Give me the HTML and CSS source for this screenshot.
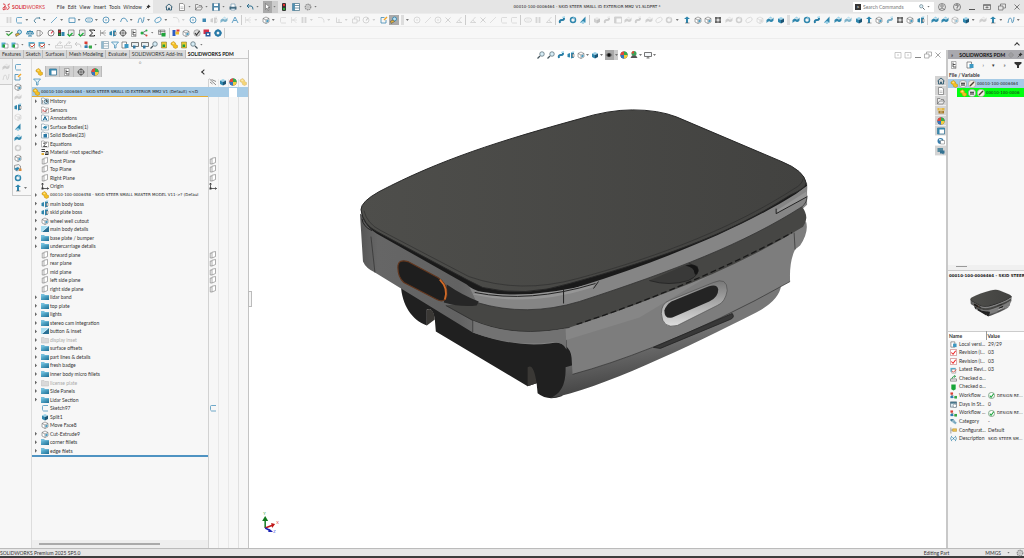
FILE: index.html
```html
<!DOCTYPE html>
<html lang="en">
<head>
<meta charset="utf-8">
<title>SOLIDWORKS</title>
<link rel="stylesheet" href="styles.css">
</head>
<body>
<svg class="defs" aria-hidden="true">
<defs>
<linearGradient id="gTop" x1="0" y1="0" x2="1" y2="0"><stop offset="0" stop-color="#4e4e4b"/><stop offset="1" stop-color="#424240"/></linearGradient>
<linearGradient id="gBand" x1="0" y1="0" x2="1" y2="0"><stop offset="0" stop-color="#555"/><stop offset=".04" stop-color="#666"/><stop offset=".22" stop-color="#626262"/><stop offset=".3" stop-color="#777"/><stop offset=".45" stop-color="#868686"/><stop offset="1" stop-color="#868686"/></linearGradient>
<linearGradient id="gSkirt" x1="0" y1="0" x2=".3" y2="1"><stop offset=".5" stop-color="#777"/><stop offset="1" stop-color="#3b3b3b"/></linearGradient>
<linearGradient id="gGrip" x1="0" y1="0" x2="0" y2="1"><stop offset="0" stop-color="#777"/><stop offset=".6" stop-color="#b5b5b5"/><stop offset="1" stop-color="#dedede"/></linearGradient>
<linearGradient id="gFold" x1="0" y1="0" x2="1" y2="1"><stop offset="0" stop-color="#6fc4e2"/><stop offset="1" stop-color="#1d6d94"/></linearGradient>
</defs>
<symbol id="model" viewBox="355 105 458 298">
<path fill="#202020" d="M401 286 C402 305 412 321 427 326 L427 310 Q433 307 435 320 L436 332 L528 387 L537 384 L538 394 Q548 402 562 397 L580 380 L580 340 L470 300Z"/>
<path fill="#3a3835" d="M427 310 Q434 307 435 320 L427 326Z M528 368 Q534 363 537 384 L528 387Z"/>
<path fill="url(#gSkirt)" d="M573 366 L566 368 Q567 393 550 399 C600 390 690 347 757 313 Q780 301 782 286Z"/>
<path fill="#7d7d7d" d="M565 326 L660 292 L794 232 L807 222 Q810 232 801 246 L796 250 Q790 262 791 282 Q720 322 653 348 Q610 365 573 375 L572 358 Q570 342 550 343Z"/>
<path fill="none" stroke="#333" stroke-width=".7" d="M573 375 Q610 365 653 348 Q720 322 791 282 M566 330 L567 348 M795 233 L796 250"/>
<path fill="url(#gBand)" d="M360 214 L363 262 Q366 269 375 273 L473 333 Q525 352 565 341 L640 318 L770 240 L808 205 L808 183 L470 270Z"/>
<path fill="#464644" d="M446 306 L477 302 Q527 312 580 290 L700 240 L802 200 L803 207 Q811 218 804 227 Q740 266 670 292 Q620 312 570 328 Q515 339 473 321Z"/>
<path fill="none" stroke="#252525" stroke-width=".7" d="M446 306 L473 321 Q515 339 570 328"/>
<path fill="none" stroke="#191919" stroke-width="1.3" stroke-dasharray="6 3" d="M577 325 Q690 288 793 233"/>
<path fill="#727272" d="M473 321 Q515 339 566 329 L567 350 Q562 341 550 343 Q512 347 473 333Z"/>
<path fill="none" stroke="#303030" stroke-width=".7" d="M473 321 V333 M371 237 L375 273"/>
<path fill="#858585" d="M469 286 Q515 303 580 280 C660 258 740 226 808 184 Q809 200 803 207 C745 244 675 271 580 302 Q527 318 477 303Z"/>
<path fill="none" stroke="#333" stroke-width=".8" d="M808 196 Q808 203 803 207 C745 244 675 271 580 302 Q527 318 477 303"/>
<path fill="#1a1a1a" d="M361 208 Q361 224 377 234 L467 285 Q478 296 520 298 Q555 297 580 287 C660 262 740 230 797 194 L808 186 L806 180 L470 276Z"/>
<path fill="#969696" d="M480 292 Q530 301 597 283 L593 288 Q530 308 473 295Z M777 211 L807 192 L808 197 L780 213Z"/>
<path fill="none" stroke="#222" stroke-width="1" d="M475 293 Q530 304 596 284 M594 289 L599 282 M777 209 V214 L808 197 M362 219 Q363 227 372 231 M564 289 V304"/>
<path fill="url(#gTop)" stroke="#282828" stroke-width="1" d="M361 210 Q361 202 379 192 C440 160 500 141 580 119 Q609 110 633 110 Q659 110 677 117 L783 162 Q805 171 807 183 Q808 188 790 196 C730 235 660 259 570 284 Q525 298 483 288 L467 280 L377 232 Q363 225 361 210Z"/>
<path fill="none" stroke="#2b2b2b" stroke-width=".6" d="M364 211 Q367 224 381 231 L469 277 Q520 295 578 279 C664 256 738 226 795 189 Q803 185 804 179"/>
<path fill="#262626" d="M447 285 Q463 296 479 302 L477 306 Q461 308 444 303Z"/>
<path fill="#1e1e1e" stroke="#62361d" stroke-width="1.2" d="M398 268 Q398 259 408 262 L438 278 Q448 284 447 296 Q445 304 437 300 L404 283 Q398 278 398 268Z"/>
<path fill="none" stroke="#cf6a28" stroke-width="1.8" d="M440 280 Q449 289 445 300"/>
<path fill="#393938" stroke="#222" stroke-width=".8" d="M650 281 Q670 287 689 281 Q702 275 698 267 L690 264"/>
<path fill="#151515" d="M686 266 Q699 263 699 272 Q696 278 695 273 Q695 268 686 266Z"/>
<path fill="url(#gGrip)" stroke="#515151" stroke-width=".7" d="M662 314 Q662 304 670 301 L714 283 Q728 277 728 291 Q726 303 718 306 L678 326 Q663 330 662 314Z"/>
<path fill="#242424" d="M665 311 Q667 305 672 302 L709 287 Q718 284 719 290 Q719 298 710 302 L673 318 Q665 320 665 311Z"/>
<path fill="#383838" stroke="#222" stroke-width=".8" d="M654 348 L733 314 Q736 318 731 320 L661 349Z"/>
</symbol>
<symbol id="cube" viewBox="0 0 16 16"><path fill="#9ed2e8" d="M2 5 8 2l6 3-6 3z"/><path fill="#2f86ad" d="M2 5l6 3v7l-6-3z"/><path fill="#1c5575" d="M14 5 8 8v7l6-3z"/></symbol>
<symbol id="cubeg" viewBox="0 0 16 16"><path fill="#fff" stroke="#555" d="M2 5l6-3 6 3v7l-6 3-6-3zM2 5l6 3 6-3M8 8v7"/><path fill="#3d98c2" d="M9 9l4-2v4l-4 2z"/></symbol>
<symbol id="ext" viewBox="0 0 16 16"><path fill="#2f86ad" d="M1 6l5-2v9l-5-1zM8 3h6v10l-6 2z"/><path fill="#9ed2e8" d="M8 3l3-2h4l-1 2z"/><path fill="#fff" stroke="#555" d="M11 6h3v6h-3z"/></symbol>
<symbol id="wedge" viewBox="0 0 16 16"><path fill="#2f86ad" d="M2 13 13 1v12l-5 2z"/><path fill="#9ed2e8" d="M2 13l6-3 5 3-5 2z"/></symbol>
<symbol id="surf" viewBox="0 0 16 16"><path fill="#2f86ad" d="M1 8q4-5 7-2 3 3 7-3v6q-4 5-7 2-3-2-7 3z"/><path fill="#9ed2e8" d="M3 6q4-4 7 0l3-2-4-3z"/></symbol>
<symbol id="swp" viewBox="0 0 16 16"><path fill="none" stroke="#287da5" stroke-width="4" d="M4 14q-2-6 4-6t3-6"/><path fill="#a8dcef" d="M9 1h5v3H9z"/></symbol>
<symbol id="arr" viewBox="0 0 16 16"><path fill="#2f86ad" d="M8 1l6 5h-4v8H6V6H2z"/><path stroke="#444" d="M4 14h9"/></symbol>
<symbol id="ring" viewBox="0 0 16 16"><circle cx="8" cy="8" r="5" fill="none" stroke="#2f86ad" stroke-width="3"/><path fill="#7fbfda" d="M8 1l5 3-4 3z"/></symbol>
<symbol id="hole" viewBox="0 0 16 16"><path fill="#666" d="M2 2h12v12H2z"/><circle cx="8" cy="8" r="3" fill="#ddd"/><path stroke="#ddd" d="M2 8h3M11 8h3M8 2v3M8 11v3"/></symbol>
<symbol id="geo" viewBox="0 0 16 16"><path fill="none" stroke="#555" d="M2 3h6l6 5-6 6H2zM8 3v11"/></symbol>
<symbol id="sk" viewBox="0 0 16 16"><path fill="none" stroke="#4b94bd" stroke-width="1.6" d="M14 3H5Q3 3 3 5v6q0 2 2 3h9"/></symbol>
<symbol id="dim" viewBox="0 0 16 16"><path fill="none" stroke="#3a7391" stroke-width="1.6" d="M2 10q4-9 12-5M2 10l4 4M14 5l-2-3"/></symbol>
<symbol id="line" viewBox="0 0 16 16"><path stroke="#4b94bd" stroke-width="1.5" d="M2 14 14 2"/></symbol>
<symbol id="rect" viewBox="0 0 16 16"><path fill="none" stroke="#3f88b1" stroke-width="1.6" d="M2 4h12v9H2z"/></symbol>
<symbol id="slot" viewBox="0 0 16 16"><rect x="1" y="4" width="14" height="8" rx="4" fill="none" stroke="#3f88b1" stroke-width="1.6"/><path stroke="#3f88b1" d="M4 8h8"/></symbol>
<symbol id="circ" viewBox="0 0 16 16"><circle cx="8" cy="8" r="6" fill="none" stroke="#3f88b1" stroke-width="1.6"/><path stroke="#3f88b1" stroke-width="1.5" d="M6 8h4"/></symbol>
<symbol id="arc" viewBox="0 0 16 16"><path fill="none" stroke="#3f88b1" stroke-width="1.6" d="M1 12q2-9 7-8t7 8"/></symbol>
<symbol id="spl" viewBox="0 0 16 16"><path fill="none" stroke="#3f88b1" stroke-width="1.6" d="M2 14q2-12 5-10t3 9q3 2 4-11"/></symbol>
<symbol id="ell" viewBox="0 0 16 16"><ellipse cx="8" cy="8" rx="7" ry="4.5" transform="rotate(-30 8 8)" fill="none" stroke="#4b94bd" stroke-width="1.5"/></symbol>
<symbol id="fil" viewBox="0 0 16 16"><path fill="none" stroke="#777" stroke-width="1.4" d="M2 3h5q7 0 7 10"/></symbol>
<symbol id="pt" viewBox="0 0 16 16"><path fill="#3f88b1" d="M5 5h7v7H5z"/></symbol>
<symbol id="txt" viewBox="0 0 16 16"><path fill="none" stroke="#4b94bd" stroke-width="1.7" d="M2 14 8 2l6 12M5 9h6"/></symbol>
<symbol id="trim" viewBox="0 0 16 16"><path fill="none" stroke="#666" d="M3 2v12M13 2 5 10M13 14 5 6M3 8h11"/></symbol>
<symbol id="hide" viewBox="0 0 16 16"><path fill="none" stroke="#555" stroke-width="1.300" d="M1 2l13 12M5 3l9 4M2 8l5 4"/></symbol>
<symbol id="x" viewBox="0 0 16 16"><path stroke="#555" stroke-width="1.5" d="M3 3l10 10M13 3 3 13"/></symbol>
<symbol id="ang" viewBox="0 0 16 16"><path fill="none" stroke="#666" stroke-width="1.4" d="M13 2 3 13h11M8 8l4 5"/></symbol>
<symbol id="perp" viewBox="0 0 16 16"><path fill="none" stroke="#666" stroke-width="1.5" d="M3 3v10h11M8 13V6"/></symbol>
<symbol id="grid" viewBox="0 0 16 16"><path fill="none" stroke="#666" stroke-width="1.3" d="M2 4h12M2 8h12M2 12h12M5 2v12M11 2v12"/></symbol>
<symbol id="skd" viewBox="0 0 16 16"><path fill="none" stroke="#3f88b1" stroke-width="1.6" d="M12 8v6H2V3h7"/><path stroke="#f0a62a" stroke-width="3" d="M8 8l6-6"/></symbol>
<symbol id="chk" viewBox="0 0 16 16"><path fill="none" stroke="#39a23e" stroke-width="2.4" d="M3 9l4 4 8-7"/><path stroke="#555" stroke-width="1.5" d="M1 5h9"/></symbol>
<symbol id="lens" viewBox="0 0 16 16"><circle cx="10" cy="6" r="4.5" fill="#d7edf6" stroke="#5a6d77" stroke-width="1.5"/><path stroke="#45555d" stroke-width="2.4" d="M6 10l-5 5"/></symbol>
<symbol id="ruler" viewBox="0 0 16 16"><circle cx="9" cy="6" r="4" fill="#bfe4f3" stroke="#277ca9" stroke-width="1.6"/><path fill="#e8b73b" stroke="#444" d="M1 10l6-2 2 3-7 4z"/></symbol>
<symbol id="scale" viewBox="0 0 16 16"><path fill="none" stroke="#287da5" stroke-width="1.8" d="M8 2v12M2 5h12M4 14h8M3 5l-2 5h5zM13 5l-3 5h5z"/></symbol>
<symbol id="doc" viewBox="0 0 16 16"><path fill="#fff" stroke="#666" stroke-width="1.3" d="M3 1h7l3 3v11H3z"/><path stroke="#888" d="M5 8h6M5 11h6"/></symbol>
<symbol id="docb" viewBox="0 0 16 16"><path fill="#fff" stroke="#555" stroke-width="1.3" d="M2 2h9v12H2z"/><path fill="#3d98c2" d="M7 6h8v8H7z"/></symbol>
<symbol id="gauge" viewBox="0 0 16 16"><circle cx="8" cy="8" r="6" fill="#fff" stroke="#777" stroke-width="1.8"/><path stroke="#d34" stroke-width="2.2" d="M8 9l4-5"/></symbol>
<symbol id="tl" viewBox="0 0 16 16"><rect x="4" y="0" width="8" height="16" rx="2" fill="#333"/><circle cx="8" cy="4" r="2.3" fill="#e33"/><circle cx="8" cy="12" r="2.3" fill="#27b438"/></symbol>
<symbol id="tlb" viewBox="0 0 16 16"><path fill="#333" d="M2 1h6v13H2z"/><path fill="#d33" d="M3 3h4v4H3z"/><path fill="#2f86ad" d="M9 6h6v8H9z"/><path fill="#1ea840" d="M3 9h4v4H3z"/></symbol>
<symbol id="docg" viewBox="0 0 16 16"><path fill="#eee" stroke="#666" stroke-width="1.3" d="M3 2h11v11H3z"/><path fill="none" stroke="#1fae3c" stroke-width="2.6" d="M1 10l4 4 6-6"/></symbol>
<symbol id="sum" viewBox="0 0 16 16"><path fill="none" stroke="#222" stroke-width="2" d="M13 4V2H3l6 6-6 6h10v-2"/></symbol>
<symbol id="tree" viewBox="0 0 16 16"><path fill="none" stroke="#666" stroke-width="1.3" d="M4 4v8h8M4 8h4"/><path fill="#dc3b32" d="M1 1h6v5H1z"/><path fill="#2b7db3" d="M1 9h6v5H1z"/><path fill="#35a847" d="M10 9h6v6h-6z"/></symbol>
<symbol id="share" viewBox="0 0 16 16"><path fill="none" stroke="#333" stroke-width="1.3" d="M13 3 4 8l9 5"/><circle cx="4" cy="8" r="3" fill="#26ac42"/><circle cx="13" cy="3" r="2" fill="#26ac42"/><circle cx="13" cy="13" r="2" fill="#d43"/></symbol>
<symbol id="shg" viewBox="0 0 16 16"><path fill="#ddd" stroke="#555" d="M1 2h13v9H1zM1 5h13M5 2v9"/><path fill="#1fa43a" d="M7 8h8v7H7z"/></symbol>
<symbol id="flag" viewBox="0 0 16 16"><path fill="#2c5cc5" d="M1 2h6v12H1z"/><path fill="#efbb2f" d="M7 5h7v6H7z"/><path fill="#da3e3e" d="M9 1h6v4H9z"/></symbol>
<symbol id="ok" viewBox="0 0 16 16"><circle cx="8" cy="8" r="6.5" fill="#ddd" stroke="#777"/><path fill="none" stroke="#333" stroke-width="2.3" d="M4 8l3 4 6-8"/></symbol>
<symbol id="red" viewBox="0 0 16 16"><path fill="#d32f48" d="M1 1h11v9H1z"/><path fill="#295d9c" d="M5 6h10v9H5z"/><path fill="#fff" d="M8 9h4v3H8z"/></symbol>
<symbol id="bodyd" viewBox="0 0 16 16"><path fill="#eee" stroke="#555" d="M1 3l8-2 4 3v6l-7 4-5-3z"/><path fill="#2f86ad" d="M1 9l7-3 3 3-6 5z"/><path fill="#dd8a3a" d="M10 9h5v5h-5z"/></symbol>
<symbol id="gearb" viewBox="0 0 16 16"><circle cx="8" cy="8" r="5" fill="none" stroke="#2778a6" stroke-width="4"/><path stroke="#2778a6" stroke-width="2" d="M8 0v16M0 8h16"/><circle cx="8" cy="8" r="2.5" fill="#f3f3f3"/></symbol>
<symbol id="gear" viewBox="0 0 16 16"><circle cx="8" cy="8" r="5.5" fill="none" stroke="#888" stroke-width="2.5" stroke-dasharray="3 1"/><circle cx="8" cy="8" r="2.5" fill="none" stroke="#888"/></symbol>
<symbol id="vin" viewBox="0 0 16 16"><path fill="#5ab1d3" d="M1 3h8v10H1z"/><path fill="#fff" stroke="#666" d="M6 6h8v8H6z"/><path fill="#21a33c" d="M3 7h5v6H3z"/></symbol>
<symbol id="vred" viewBox="0 0 16 16"><path fill="#5ab1d3" d="M1 2h12v9H1z"/><path fill="#fff" stroke="#666" d="M4 5h9v9H4z"/><path fill="none" stroke="#d43" stroke-width="2" d="M5 9l3 3 6-6"/></symbol>
<symbol id="scr" viewBox="0 0 16 16"><path fill="#e8eef0" stroke="#555" stroke-width="1.6" d="M1 3h14v8H1z"/><path fill="#3177a0" d="M4 9h5v6H4z"/></symbol>
<symbol id="yel" viewBox="0 0 16 16"><path fill="#e9c92f" stroke="#776a31" d="M3 2h10v12H3z"/><path fill="#239d3c" d="M5 7h5v5H5z"/></symbol>
<symbol id="part" viewBox="0 0 16 16"><path fill="#f4bf22" stroke="#b98617" d="M2 4l5-3 4 3v3l4 2v4l-4 2-4-2-1-4-4-2z"/><path fill="#ffe080" d="M4 4l3-1 2 2-3 2z"/></symbol>
<symbol id="eyeb" viewBox="0 0 16 16"><path fill="#777" d="M1 8q7-9 14 0-7 9-14 0z"/><circle cx="8" cy="8" r="3.4" fill="#111"/></symbol>
<symbol id="ball" viewBox="0 0 16 16"><circle cx="8" cy="8" r="7" fill="#333"/><path fill="#e4463c" d="M8 8V1a7 7 0 0 0-7 7z"/><path fill="#36ae4a" d="M8 8h7a7 7 0 0 0-7-7z"/><path fill="#f3cd3c" d="M8 8v7a7 7 0 0 0 7-7z"/><path fill="#3575bf" d="M8 8H1a7 7 0 0 0 7 7z"/></symbol>
<symbol id="scene" viewBox="0 0 16 16"><circle cx="8" cy="5" r="5" fill="#3ba358"/><path fill="#d84b3c" d="M8 5V0a5 5 0 0 0-5 5z"/><path fill="#555" d="M1 14l3-5h8l3 5z"/></symbol>
<symbol id="mon" viewBox="0 0 16 16"><path fill="#f5f8fa" stroke="#555" stroke-width="1.6" d="M1 3h14v8H1zM8 11v3M5 14h6"/></symbol>
<symbol id="home" viewBox="0 0 16 16"><path fill="none" stroke="#315b72" stroke-width="1.8" d="M1 8l7-6 7 6M3 7v7h4v-4h2v4h4V7"/></symbol>
<symbol id="open" viewBox="0 0 16 16"><path fill="#eee" stroke="#666" stroke-width="1.3" d="M1 14V3h5l2 2h5v3M1 14l4-6h10l-3 6z"/></symbol>
<symbol id="save" viewBox="0 0 16 16"><path fill="#4c86a8" stroke="#3b6c88" d="M1 1h14v14H1z"/><path fill="#fff" d="M4 1h8v5H4zM4 9h8v6H4z"/></symbol>
<symbol id="print" viewBox="0 0 16 16"><path fill="#45697d" d="M1 7h14v6H1z"/><path fill="#fff" stroke="#477b98" d="M4 2h8v6H4zM4 11h8v3H4z"/></symbol>
<symbol id="undo" viewBox="0 0 16 16"><path fill="none" stroke="#31708f" stroke-width="2" d="M6 2 2 6l4 4M2 6h8q4 0 4 7"/></symbol>
<symbol id="cur" viewBox="0 0 16 16"><path fill="#fff" stroke="#555" d="M5 1v12l3-3 2 5 2-1-2-5h4z"/></symbol>
<symbol id="list" viewBox="0 0 16 16"><path fill="#fff" stroke="#49758b" stroke-width="1.5" d="M1 1h14v14H1zM5 1v14M5 5h10M5 10h10"/><path fill="#4e91b5" d="M1 1h4v14H1z"/></symbol>
<symbol id="pin" viewBox="0 0 16 16"><path fill="#333" d="M9 1l6 6-3 1-3 4-5-5 4-3z"/><path stroke="#333" stroke-width="1.5" d="M7 9l-5 5"/></symbol>
<symbol id="user" viewBox="0 0 16 16"><circle cx="8" cy="8" r="7" fill="none" stroke="#555" stroke-width="1.3"/><circle cx="8" cy="6" r="2.5" fill="none" stroke="#555" stroke-width="1.3"/><path fill="none" stroke="#555" stroke-width="1.3" d="M3 13q5-6 10 0"/></symbol>
<symbol id="help" viewBox="0 0 16 16"><circle cx="8" cy="8" r="7" fill="none" stroke="#555" stroke-width="1.4"/><path fill="none" stroke="#444" stroke-width="1.6" d="M5.500 6q0-2.500 2.500-2.500T10.500 6q0 1.500-2.500 2.500v1.500M8 11v2"/></symbol>
<symbol id="min" viewBox="0 0 16 16"><path stroke="#555" stroke-width="2" d="M2 13h12"/></symbol>
<symbol id="dock" viewBox="0 0 16 16"><path fill="none" stroke="#666" stroke-width="1.5" d="M1 3h14v10H1zM1 5h14M8 6v5M5 9h6"/></symbol>
<symbol id="rest" viewBox="0 0 16 16"><path fill="none" stroke="#666" stroke-width="1.4" d="M1 6h9v8H1zM5 6V2h10v8h-5"/></symbol>
<symbol id="pane" viewBox="0 0 16 16"><path fill="none" stroke="#888" stroke-width="1.3" d="M2 3h12v11H2zM10 8H6"/></symbol>
<symbol id="funnel" viewBox="0 0 16 16"><path fill="#e8f6fc" stroke="#3f88b1" stroke-width="1.5" d="M1 2h14l-5 6v6H7V8z"/></symbol>
<symbol id="fdark" viewBox="0 0 16 16"><path fill="#333" d="M1 2h14v3l-5 4v5H6V9L1 5z"/></symbol>
<symbol id="prop" viewBox="0 0 16 16"><path fill="#fff" stroke="#2c6c8f" stroke-width="1.5" d="M1 2h14v12H1z"/><path fill="#3888ae" d="M1 2h14v3H1zM1 5h4v9H1z"/></symbol>
<symbol id="conf" viewBox="0 0 16 16"><path fill="#fff" stroke="#666" d="M3 1h9v14H3z"/><path fill="none" stroke="#333" stroke-width="1.6" d="M6 3v9h6M6 7h5"/></symbol>
<symbol id="target" viewBox="0 0 16 16"><circle cx="8" cy="8" r="5.500" fill="none" stroke="#444" stroke-width="1.5"/><path stroke="#444" stroke-width="1.300" d="M8 0v16M0 8h16"/></symbol>
<symbol id="fold" viewBox="0 0 16 16"><path fill="#78bedb" d="M0 2h6l2 2h8v3H0z"/><path fill="url(#gFold)" d="M0 5h16v9H0z"/></symbol>
<symbol id="folds" viewBox="0 0 16 16"><path fill="#a6ddf1" d="M0 2h16v12H0z"/><path fill="#286f93" d="M16 2v12H2z"/><path stroke="#fff" d="M1 14 15 2"/></symbol>
<symbol id="foldg" viewBox="0 0 16 16"><path fill="#d9d9d9" stroke="#bbb" d="M1 3h5l2 2h7v9H1z"/></symbol>
<symbol id="fhist" viewBox="0 0 16 16"><path fill="#fff" stroke="#59798a" d="M1 2h5l2 2h7v10H1z"/><circle cx="10" cy="9" r="4" fill="#cfe8f3" stroke="#3c6478" stroke-width="1.500"/><path stroke="#333" d="M10 6v3h3M3 6v7"/></symbol>
<symbol id="fsens" viewBox="0 0 16 16"><path fill="#fff" stroke="#777" d="M1 2h5l2 2h7v10H1z"/><path fill="none" stroke="#c44" stroke-width="1.500" d="M4 12V7l4 5 5-6"/><path stroke="#333" d="M10 6v7"/></symbol>
<symbol id="fann" viewBox="0 0 16 16"><path fill="#fff" stroke="#59798a" d="M1 2h5l2 2h7v10H1z"/><path fill="none" stroke="#1f6e99" stroke-width="2" d="M4 13l4-8 4 8M6 10h5"/></symbol>
<symbol id="fsurf" viewBox="0 0 16 16"><path fill="#fff" stroke="#59798a" d="M1 2h5l2 2h7v10H1z"/><path fill="#2f86ad" d="M3 10l4-4 6 1-3 5z"/></symbol>
<symbol id="fsol" viewBox="0 0 16 16"><path fill="#fff" stroke="#59798a" d="M1 2h5l2 2h7v10H1z"/><path fill="#2778a6" d="M5 6h7v7H5z"/></symbol>
<symbol id="feq" viewBox="0 0 16 16"><path fill="#fff" stroke="#777" d="M1 2h5l2 2h7v10H1z"/><path fill="none" stroke="#222" stroke-width="1.500" d="M12 6H5l3 3-3 4h7"/></symbol>
<symbol id="mat" viewBox="0 0 16 16"><path stroke="#444" stroke-width="2" d="M1 3h7M1 7h7"/><path fill="#e0ae35" d="M1 10h5v4H1z"/><path fill="none" stroke="#333" stroke-width="2" d="M8 13h7M10 12V7h4v5"/></symbol>
<symbol id="pl" viewBox="0 0 16 16"><path fill="#fff" stroke="#777" stroke-width="1.200" d="M6 2.500 13 1v10l-7 3zM6 4H2.500v10H6"/></symbol>
<symbol id="org" viewBox="0 0 16 16"><path fill="none" stroke="#333" stroke-width="1.500" d="M3 2v11h12M1 5l2-3 2 3M12 11l3 2-3 2"/><path fill="#333" d="M1 11h4v4H1z"/></symbol>
<symbol id="book" viewBox="0 0 16 16"><path fill="#e3b646" d="M1 2h14v5H1z"/><path fill="#a57b29" d="M3 8h11v5H3z"/><path stroke="#fff" d="M4 4h6M6 10h5"/></symbol>
<symbol id="cfgt" viewBox="0 0 16 16"><path fill="none" stroke="#777" stroke-width="1.500" d="M2 1v14M2 7h5"/><path fill="#efc34c" stroke="#a87e21" d="M6 4h9v6H6z"/></symbol>
<symbol id="pdm" viewBox="0 0 16 16"><circle cx="7" cy="8" r="6" fill="#397eac"/><path fill="#fff" stroke="#666" d="M7 7h8v7H7z"/><path fill="#d5e8f0" d="M4 4h5v3H4z"/></symbol>
<symbol id="chat" viewBox="0 0 16 16"><path fill="#54899e" d="M1 2h11v8H1z"/><path fill="#347292" d="M6 7h9v6h-2v2l-3-2H6z"/></symbol>
<symbol id="eq" viewBox="0 0 16 16"><circle cx="8" cy="8" r="7.500" fill="#eee" stroke="#777"/><path stroke="#222" stroke-width="2" d="M4 6.500h8M4 10h8"/></symbol>
<symbol id="pen" viewBox="0 0 16 16"><circle cx="8" cy="8" r="7.500" fill="#f4eee3" stroke="#888"/><path stroke="#4d4235" stroke-width="3" d="M4 12l8-8"/></symbol>
<symbol id="rchk" viewBox="0 0 16 16"><path fill="#fff" stroke="#b66" stroke-width="1.300" d="M1 1h14v14H1z"/><path fill="none" stroke="#e22" stroke-width="2.400" d="M3 8l4 4 6-8"/></symbol>
<symbol id="gchk" viewBox="0 0 16 16"><circle cx="8" cy="8" r="7" fill="#fff" stroke="#397746" stroke-width="1.300"/><path fill="none" stroke="#19a33a" stroke-width="2.400" d="M4 8l3 4 6-8"/></symbol>
<symbol id="out" viewBox="0 0 16 16"><path fill="#eee" stroke="#555" stroke-width="1.300" d="M1 9h14v5H1z"/><path fill="none" stroke="#259743" stroke-width="2" d="M4 9q1-6 7-6M9 1l4 2-3 3"/></symbol>
<symbol id="grn" viewBox="0 0 16 16"><path fill="#16a536" d="M3 1h10v11l-5 3-5-3z"/></symbol>
<symbol id="days" viewBox="0 0 16 16"><path fill="#ddeaf0" stroke="#567" stroke-width="1.500" d="M1 2h14v12H1z"/><path fill="#477489" d="M1 2h14v4H1z"/><circle cx="11" cy="11" r="4" fill="#fff" stroke="#456"/></symbol>
<symbol id="tags" viewBox="0 0 16 16"><path fill="#43819d" d="M1 2h6l5 5-4 4-7-5z"/><path fill="#77a8c0" stroke="#fff" d="M6 6h5l5 5-4 4-6-5z"/></symbol>
<symbol id="var" viewBox="0 0 16 16"><path fill="none" stroke="#287da5" stroke-width="1.600" d="M4 2q-5 6 0 12M12 2q5 6 0 12M5.500 5l5 6M10.500 5l-5 6"/></symbol>
<symbol id="ds" viewBox="0 0 48 44"><path fill="none" stroke="#d5202a" stroke-width="4.500" d="M5 5q14 0 12 9t-15 15M17 20q9 3 5 11-5 7-17 6 8-7 12-17M43 5q-15 2-10 9 9 9 5 15t-13 7"/></symbol>
</svg>

<div class="app">
<header class="title">
<div class="brand"><svg class="ds"><use href="#ds"/></svg><span><b>SOLID</b>WORKS</span>
<nav><button>File</button><button>Edit</button><button>View</button><button>Insert</button><button>Tools</button><button>Window</button></nav><svg><use href="#pin"/></svg></div>
<div class="quick"><button><svg><use href="#home"/></svg></button><button class="d"><svg><use href="#doc"/></svg></button><button class="d"><svg><use href="#open"/></svg></button><button class="d"><svg><use href="#save"/></svg></button><button class="d"><svg><use href="#print"/></svg></button><button class="d"><svg><use href="#undo"/></svg></button><button class="d pick"><svg><use href="#cur"/></svg></button><button><svg><use href="#tl"/></svg></button><button class="wide"><svg><use href="#list"/></svg></button><button class="d"><svg><use href="#gear"/></svg></button></div>
<h1 class="id">00010-100-0006464 - SKID STEER SMALL ID EXTERIOR MM2 V1.SLDPRT *</h1>
<label class="search"><span class="prompt">&gt;</span><input type="text" placeholder="Search Commands" aria-label="Search Commands"><svg class="flip"><use href="#lens"/></svg><i></i></label>
<div class="win"><button><svg><use href="#user"/></svg></button><button><svg><use href="#help"/></svg></button><button><svg><use href="#min"/></svg></button><button><svg><use href="#dock"/></svg></button><button><svg><use href="#rest"/></svg></button><button><svg><use href="#x"/></svg></button></div>
</header>

<div class="bar main">
<button class="off"><svg><use href="#grid"/></svg></button><button class="d"><svg><use href="#sk"/></svg></button><button class="d"><svg><use href="#dim"/></svg></button><button class="d"><svg><use href="#line"/></svg></button><button class="d"><svg><use href="#rect"/></svg></button><button class="d"><svg><use href="#slot"/></svg></button><button class="d"><svg><use href="#circ"/></svg></button><button class="d"><svg><use href="#arc"/></svg></button><button class="d"><svg><use href="#spl"/></svg></button><button class="d"><svg><use href="#ell"/></svg></button><button class="d off"><svg><use href="#fil"/></svg></button><button><svg><use href="#circ"/></svg></button><button><svg><use href="#pt"/></svg></button><button class="off"><svg><use href="#ext"/></svg></button><button class="dim"><svg><use href="#surf"/></svg></button><button><svg><use href="#txt"/></svg></button><i class="s"></i><button class="d off"><svg><use href="#trim"/></svg></button><button class="d"><svg><use href="#cubeg"/></svg></button><button class="off"><svg><use href="#sk"/></svg></button><button class="off"><svg><use href="#trim"/></svg></button><button class="d off"><svg><use href="#grid"/></svg></button><button class="d off"><svg><use href="#fil"/></svg></button><button class="d off"><svg><use href="#perp"/></svg></button><button class="off"><svg><use href="#rest"/></svg></button><button class="d off"><svg><use href="#gauge"/></svg></button><button><svg><use href="#skd"/></svg></button><button class="on"><svg><use href="#ruler"/></svg></button><i class="s fat"></i><i class="dot"></i><button class="off"><svg><use href="#circ"/></svg></button><button class="off"><svg><use href="#line"/></svg></button><button class="off"><svg><use href="#circ"/></svg></button><button class="off"><svg><use href="#x"/></svg></button><button class="off"><svg><use href="#ang"/></svg></button><i class="s"></i><button class="off"><svg><use href="#ang"/></svg></button><button class="off"><svg><use href="#x"/></svg></button><button class="off"><svg><use href="#line"/></svg></button><button class="off"><svg><use href="#sk"/></svg></button><button class="off"><svg><use href="#sk"/></svg></button><i class="s"></i><button class="off"><svg><use href="#slot"/></svg></button><button class="off"><svg><use href="#grid"/></svg></button><button class="off"><svg><use href="#ang"/></svg></button><i class="s"></i><button><svg><use href="#swp"/></svg></button><button><svg><use href="#ring"/></svg></button><button><svg><use href="#wedge"/></svg></button><i class="s"></i><button class="off"><svg><use href="#cube"/></svg></button><button class="off"><svg><use href="#swp"/></svg></button><button class="off"><svg><use href="#prop"/></svg></button><button class="off"><svg><use href="#surf"/></svg></button><button class="off"><svg><use href="#swp"/></svg></button><button class="off"><svg><use href="#surf"/></svg></button><button class="off"><svg><use href="#ell"/></svg></button><button class="off"><svg><use href="#ring"/></svg></button><i class="dot"></i><button><svg><use href="#arr"/></svg></button><button><svg><use href="#cubeg"/></svg></button><button><svg><use href="#cubeg"/></svg></button><button><svg><use href="#hole"/></svg></button><button class="off"><svg><use href="#surf"/></svg></button><button class="off"><svg><use href="#ring"/></svg></button><button class="off"><svg><use href="#ell"/></svg></button><button class="off"><svg><use href="#cubeg"/></svg></button><button><svg><use href="#surf"/></svg></button><button><svg><use href="#cube"/></svg></button><i class="s fat"></i><button><svg><use href="#surf"/></svg></button><button><svg><use href="#ring"/></svg></button><button><svg><use href="#swp"/></svg></button><button><svg><use href="#wedge"/></svg></button><button><svg><use href="#surf"/></svg></button><button class="dim"><svg><use href="#surf"/></svg></button><button><svg><use href="#cube"/></svg></button><button><svg><use href="#arr"/></svg></button><button><svg><use href="#cubeg"/></svg></button><button class="dim"><svg><use href="#swp"/></svg></button><button><svg><use href="#hole"/></svg></button><button><svg><use href="#cubeg"/></svg></button><button><svg><use href="#ext"/></svg></button><i class="s"></i><button><svg><use href="#surf"/></svg></button><button><svg><use href="#surf"/></svg></button><button class="dim"><svg><use href="#cubeg"/></svg></button><button class="d"><svg><use href="#cube"/></svg></button><button class="off"><svg><use href="#surf"/></svg></button><button class="d"><svg><use href="#arr"/></svg></button><button class="d"><svg><use href="#spl"/></svg></button>
</div>
<div class="bar"><div class="set eval"><button><svg><use href="#chk"/></svg></button><button><svg><use href="#ruler"/></svg></button><button><svg><use href="#scale"/></svg></button><button><svg><use href="#geo"/></svg></button><button><svg><use href="#gauge"/></svg></button><button><svg><use href="#tlb"/></svg></button><button><svg><use href="#docg"/></svg></button><button><svg><use href="#docg"/></svg></button><button><svg><use href="#sum"/></svg></button><button><svg><use href="#trim"/></svg></button><button><svg><use href="#ext"/></svg></button><button><svg><use href="#target"/></svg></button><button><svg><use href="#conf"/></svg></button><button><svg><use href="#share"/></svg></button><i class="dot"></i><button><svg><use href="#shg"/></svg></button><i class="s"></i><button><svg><use href="#flag"/></svg></button><button><svg><use href="#cubeg"/></svg></button><button><svg><use href="#ok"/></svg></button><button><svg><use href="#red"/></svg></button><button><svg><use href="#gearb"/></svg></button><i class="s"></i></div></div>
<div class="bar"><div class="set vault"><button><svg><use href="#vin"/></svg></button><button class="d"><svg><use href="#vin"/></svg></button><button><svg><use href="#vred"/></svg></button><button class="d"><svg><use href="#vred"/></svg></button><button class="off"><svg><use href="#out"/></svg></button><button class="off"><svg><use href="#out"/></svg></button><button class="off"><svg><use href="#undo"/></svg></button><button class="d"><svg><use href="#tree"/></svg></button><button class="dim"><svg><use href="#list"/></svg></button><button><svg><use href="#funnel"/></svg></button><button><svg><use href="#docb"/></svg></button><button><svg><use href="#scr"/></svg></button><button><svg><use href="#scr"/></svg></button><button><svg><use href="#lens"/></svg></button><button><svg><use href="#yel"/></svg></button><button><svg><use href="#part"/></svg></button><button><svg><use href="#yel"/></svg></button><button class="d"><svg class="flip"><use href="#lens"/></svg></button></div><span class="up"></span></div>

<div class="body">
<aside class="left">
<div class="tabs"><button>Features</button><button>Sketch</button><button>Surfaces</button><button>Mesh Modeling</button><button>Evaluate</button><button>SOLIDWORKS Add-Ins</button><button class="act">SOLIDWORKS PDM</button></div>
<div class="cols">
<div class="tool1"><button class="off"><svg><use href="#surf"/></svg></button><button class="off"><svg><use href="#spl"/></svg></button></div>
<div class="tool2"><button><svg><use href="#sk"/></svg></button><button><svg><use href="#skd"/></svg></button><button><svg><use href="#cubeg"/></svg></button><button class="off"><svg><use href="#surf"/></svg></button><button><svg><use href="#ext"/></svg></button><button class="off"><svg><use href="#cubeg"/></svg></button><button><svg><use href="#wedge"/></svg></button><button><svg><use href="#surf"/></svg></button><button class="off"><svg><use href="#ring"/></svg></button><button><svg><use href="#cubeg"/></svg></button><button><svg><use href="#bodyd"/></svg></button><button><svg><use href="#ring"/></svg></button><button class="d"><svg><use href="#arr"/></svg></button></div>
<section class="fm">
<div class="grip">○</div>
<div class="fmtabs"><button class="act"><svg><use href="#part"/></svg></button><button><svg><use href="#prop"/></svg></button><button><svg><use href="#conf"/></svg></button><button><svg><use href="#target"/></svg></button><button><svg><use href="#ball"/></svg></button><span class="back"></span></div>
<div class="row filter"><span><svg><use href="#funnel"/></svg></span><svg><use href="#hide"/></svg><svg><use href="#cube"/></svg><svg><use href="#ball"/></svg><svg class="dim"><use href="#part"/></svg></div>
<div class="row root"><span class="id"><svg><use href="#part"/></svg>00010-100-0006464 - SKID STEER SMALL ID EXTERIOR MM2 V1 (Default) &lt;&lt;D</span><i></i><i></i><i class="w"></i><i></i></div>
<ul class="tree">
<li class="row e"><span><svg><use href="#fhist"/></svg>History</span></li>
<li class="row"><span><svg><use href="#fsens"/></svg>Sensors</span></li>
<li class="row e"><span><svg><use href="#fann"/></svg>Annotations</span></li>
<li class="row e"><span><svg><use href="#fsurf"/></svg>Surface Bodies(1)</span></li>
<li class="row e"><span><svg><use href="#fsol"/></svg>Solid Bodies(23)</span></li>
<li class="row e"><span><svg><use href="#feq"/></svg>Equations</span></li>
<li class="row"><span><svg><use href="#mat"/></svg>Material &lt;not specified&gt;</span></li>
<li class="row"><span><svg><use href="#pl"/></svg>Front Plane</span><svg><use href="#pl"/></svg></li>
<li class="row"><span><svg><use href="#pl"/></svg>Top Plane</span><svg><use href="#pl"/></svg></li>
<li class="row"><span><svg><use href="#pl"/></svg>Right Plane</span><svg><use href="#pl"/></svg></li>
<li class="row"><span><svg><use href="#org"/></svg>Origin</span><svg><use href="#org"/></svg></li>
<li class="row e"><span class="id"><svg><use href="#part"/></svg>00010-100-0006458 - SKID STEER SMALL MASTER MODEL V11-&gt;? (Defaul</span></li>
<li class="row e"><span><svg><use href="#ext"/></svg>main body boss</span></li>
<li class="row e"><span><svg><use href="#ext"/></svg>skid plate boss</span></li>
<li class="row e"><span><svg><use href="#cubeg"/></svg>wheel well cutout</span></li>
<li class="row e"><span><svg><use href="#folds"/></svg>main body details</span></li>
<li class="row e"><span><svg><use href="#fold"/></svg>base plate / bumper</span></li>
<li class="row e"><span><svg><use href="#fold"/></svg>undercarriage details</span></li>
<li class="row"><span><svg><use href="#pl"/></svg>forward plane</span><svg><use href="#pl"/></svg></li>
<li class="row"><span><svg><use href="#pl"/></svg>rear plane</span><svg><use href="#pl"/></svg></li>
<li class="row"><span><svg><use href="#pl"/></svg>mid plane</span><svg><use href="#pl"/></svg></li>
<li class="row"><span><svg><use href="#pl"/></svg>left side plane</span><svg><use href="#pl"/></svg></li>
<li class="row"><span><svg><use href="#pl"/></svg>right side plane</span><svg><use href="#pl"/></svg></li>
<li class="row e"><span><svg><use href="#fold"/></svg>lidar band</span></li>
<li class="row e"><span><svg><use href="#fold"/></svg>top plate</span></li>
<li class="row e"><span><svg><use href="#fold"/></svg>lights</span></li>
<li class="row e"><span><svg><use href="#fold"/></svg>stereo cam integration</span></li>
<li class="row e"><span><svg><use href="#folds"/></svg>button &amp; inset</span></li>
<li class="row e g"><span><svg><use href="#foldg"/></svg>display inset</span></li>
<li class="row e"><span><svg><use href="#fold"/></svg>surface offsets</span></li>
<li class="row e"><span><svg><use href="#fold"/></svg>part lines &amp; details</span></li>
<li class="row e"><span><svg><use href="#fold"/></svg>fresh badge</span></li>
<li class="row e"><span><svg><use href="#fold"/></svg>inner body micro fillets</span></li>
<li class="row e g"><span><svg><use href="#foldg"/></svg>license plate</span></li>
<li class="row e"><span><svg><use href="#fold"/></svg>Side Panels</span></li>
<li class="row e"><span><svg><use href="#fold"/></svg>Lidar Section</span></li>
<li class="row"><span><svg><use href="#sk"/></svg>Sketch97</span><svg><use href="#sk"/></svg></li>
<li class="row"><span><svg><use href="#cube"/></svg>Split1</span></li>
<li class="row"><span><svg><use href="#cubeg"/></svg>Move Face8</span></li>
<li class="row e"><span><svg><use href="#cubeg"/></svg>Cut-Extrude9</span></li>
<li class="row e"><span><svg><use href="#fold"/></svg>corner fillets</span></li>
<li class="row e"><span><svg><use href="#fold"/></svg>edge filets</span></li>
</ul>
<div class="rollback"></div>
<div class="hscroll"><i></i></div>
</section>
</div>
</aside>

<main class="view">
<svg class="canvas" viewBox="249 50 698 499">
<use href="#model" x="355" y="105" width="458" height="298"/>
<g stroke-width="1.500" fill="none"><path stroke="#117a1d" d="M265 529v-8"/><path stroke="#c01818" d="M265 529l8-3"/><path stroke="#1a22b5" d="M265 529l6 3"/></g>
<path fill="#117a1d" d="M262 522l3-5 3 5z"/><path fill="#c01818" d="M271 524l4 1-3 4z"/><path fill="#1a22b5" d="M269 530l4 3-5 0z"/>
<g class="ax"><text x="263" y="516" fill="#2ca53a">Y</text><text x="276" y="525" fill="#e04444">X</text><text x="273" y="534" fill="#4a52dd">Z</text></g>
</svg>
<div class="heads"><button><svg><use href="#lens"/></svg></button><button><svg><use href="#lens"/></svg></button><button><svg><use href="#swp"/></svg></button><button><svg><use href="#ext"/></svg></button><button class="d"><svg><use href="#cubeg"/></svg></button><button class="d"><svg><use href="#cube"/></svg></button><button class="d pick"><svg><use href="#eyeb"/></svg></button><button><svg><use href="#ball"/></svg></button><button class="d"><svg><use href="#scene"/></svg></button><button class="d"><svg><use href="#mon"/></svg></button></div>
<div class="docwin"><button><svg><use href="#pane"/></svg></button><button><svg><use href="#pane"/></svg></button><button><svg><use href="#min"/></svg></button><button><svg><use href="#rest"/></svg></button><button><svg><use href="#x"/></svg></button></div>
<div class="task"><button><svg><use href="#home"/></svg></button><button><svg><use href="#doc"/></svg></button><button><svg><use href="#open"/></svg></button><button><svg><use href="#book"/></svg></button><button><svg><use href="#ball"/></svg></button><button><svg><use href="#prop"/></svg></button><button class="act"><svg><use href="#pdm"/></svg></button><button><svg><use href="#chat"/></svg></button></div>
<button class="split" aria-label="Collapse panel"></button>
</main>

<aside class="pdm">
<header><span>»</span><b>SOLIDWORKS PDM</b><svg><use href="#gear"/></svg><svg><use href="#pin"/></svg></header>
<div class="ptools"><button><svg><use href="#conf"/></svg></button><button><svg><use href="#docb"/></svg></button><span>›</span><span>▾</span><span>»</span><button><svg><use href="#fdark"/></svg></button></div>
<h2>File / Variable</h2>
<div class="file sel id"><svg><use href="#part"/></svg><svg><use href="#eq"/></svg><svg><use href="#pen"/></svg>00010-100-0006464</div>
<div class="file ref id"><svg><use href="#part"/></svg><svg><use href="#eq"/></svg><svg><use href="#pen"/></svg>00010-100-0006</div>
<div class="pscroll"><i></i></div>
<h3 class="id">00010-100-0006464 - SKID STEER</h3>
<svg class="thumb"><use href="#model"/></svg>
<table>
<thead><tr><th>Name</th><th>Value</th></tr></thead>
<tbody>
<tr><td><svg><use href="#docb"/></svg>Local versi...</td><td>29/29</td></tr>
<tr><td><svg><use href="#rchk"/></svg>Revision (l...</td><td>03</td></tr>
<tr><td><svg><use href="#rchk"/></svg>Revision (l...</td><td>03</td></tr>
<tr><td><svg><use href="#vred"/></svg>Latest Revi...</td><td>03</td></tr>
<tr><td><svg><use href="#out"/></svg>Checked o...</td><td></td></tr>
<tr><td><svg><use href="#grn"/></svg>Checked o...</td><td></td></tr>
<tr><td><svg><use href="#tree"/></svg>Workflow ...</td><td class="id"><svg><use href="#gchk"/></svg>DESIGN RE...</td></tr>
<tr><td><svg><use href="#days"/></svg>Days In St...</td><td>0</td></tr>
<tr><td><svg><use href="#tree"/></svg>Workflow ...</td><td class="id"><svg><use href="#gchk"/></svg>DESIGN RE...</td></tr>
<tr><td><svg><use href="#tags"/></svg>Category</td><td>-</td></tr>
<tr><td><svg><use href="#cfgt"/></svg>Configurat...</td><td>Default</td></tr>
<tr><td><svg><use href="#var"/></svg>Description</td><td class="id">SKID STEER SM...</td></tr>
</tbody>
</table>
</aside>
</div>

<footer><span>SOLIDWORKS Premium 2025 SP5.0</span><span class="edit">Editing Part</span><button>MMGS</button><i class="dot"></i><svg><use href="#gear"/></svg></footer>
</div>
</body>
</html>
```

FILE: styles.css
```css
* { box-sizing: border-box; }
body { margin: 0; font: 5px/8px Lato, "Open Sans", sans-serif; color: #333; background: #fff; overflow: hidden; }
svg { width: 8px; height: 8px; flex: none; display: block; }
.defs { position: absolute; width: 0; height: 0; }
button { font: inherit; color: inherit; border: 0; padding: 0; background: none; display: flex; align-items: center; flex: none; }
h1, h2, h3, ul { margin: 0; padding: 0; font: inherit; list-style: none; white-space: nowrap; }
.app .id { font-family: "DejaVu Sans", sans-serif; font-size: 4px; color: #222; }
.off { opacity: .3; filter: grayscale(1); }
.dim { opacity: .6; }
.flip { transform: scaleX(-1); }
.d { width: 15px; justify-content: space-between; }
.d::after, .dot, .search i { content: ""; width: 3px; height: 2px; margin-right: 2px; background: #777; clip-path: polygon(0 0, 100% 0, 50% 100%); }
.app { height: 100vh; display: flex; flex-direction: column; border-bottom: 2px solid #3c3c3c; }

.title { display: flex; align-items: center; height: 13px; flex: none; background: #e5e5e5; }
.brand { display: flex; align-items: center; width: 153px; height: 13px; padding-left: 2px; background: #f5f5f5; flex: none; }
.brand > span { color: #d9363c; margin-left: 1px; }
.brand svg.ds { width: 9px; height: 8px; }
.brand > svg:last-child { width: 6px; height: 6px; margin: 0 2px 0 3px; }
.brand nav { display: flex; flex: 1; gap: 3px; justify-content: flex-end; }
.quick { display: flex; align-items: center; gap: 2px; padding-left: 12px; }
.quick > :first-child { margin-right: 3px; }
.quick .wide { margin: 0 2px; }
.pick { background: linear-gradient(90deg, #a9a9a9 9px, #ccc 9px); height: 12px; }
.title h1 { flex: 1; text-align: center; padding-left: 2px; }
.search { display: flex; align-items: center; width: 81px; height: 10px; background: #fff; padding: 0 2px; gap: 2px; }
.prompt { background: #333; color: #fff; width: 6px; height: 6px; line-height: 6px; text-align: center; }
.search input { flex: 1; min-width: 0; border: 0; padding: 0; font: inherit; outline: 0; }
.search input::placeholder { color: #777; }
.search svg { width: 6px; height: 6px; }
.win { display: flex; gap: 7px; padding: 0 3px 0 4px; }

.bar { display: flex; align-items: center; justify-content: space-between; height: 12px; flex: none; background: #f7f7f7; border-top: 1px solid #ececec; padding: 0 5px; }
.main { height: 13px; padding-right: 1px; }
.set { display: flex; align-items: center; justify-content: space-between; }
.eval { width: 220px; }
.vault { width: 204px; margin-left: -4px; }
.s { width: 1px; height: 10px; background: #ccc; }
.s.fat { width: 3px; background: #ddd; }
.on { background: #aaa; box-shadow: 0 0 0 1px #aaa; }
.up, .back { width: 4px; height: 4px; border: solid #333; border-width: 1px 0 0 1px; transform: rotate(45deg); }

.body { flex: 1; display: flex; min-height: 0; }
.left { width: 249px; flex: none; display: flex; flex-direction: column; background: #f7f7f7; border-right: 1px solid #c4c4c4; }
.tabs { display: flex; height: 9px; border-bottom: 1px solid #c8c8c8; background: #f7f7f7; }
.tabs button { background: #dadada; border-right: 1px solid #bbb; padding: 0 2px; white-space: nowrap; }
.tabs .act { background: #f7f7f7; font-weight: 700; color: #111; border: 0; }
.cols { flex: 1; display: flex; align-items: flex-start; }
.tool1 { width: 12px; height: 26px; border-bottom: 1px solid #ccc; display: flex; flex-direction: column; gap: 2px; padding: 4px 2px; background: #f1f1f1; }
.tool2 { width: 19px; height: 137px; border: solid #ccc; border-width: 0 0 1px 1px; display: flex; flex-direction: column; justify-content: space-between; padding: 4px 1px 3px 1px; }
.fm { flex: 1; align-self: stretch; min-width: 0; display: flex; flex-direction: column; border-left: 1px solid #ddd;
  background: linear-gradient(90deg, #d2d2d2 1px, transparent 1px 10px, #e8e8e8 10px 11px, transparent 11px 20px, #e8e8e8 20px 21px, transparent 21px 30px, #e0e0e0 30px 31px, transparent 31px) right 0 top 20px / 40px 100% no-repeat; }
.grip { height: 7px; text-align: center; font-size: 4px; color: #777; }
.fmtabs { display: flex; align-items: center; height: 11px; }
.fmtabs button { width: 14px; height: 11px; justify-content: center; background: #d0d0d0; border-right: 1px solid #bbb; }
.fmtabs .act { background: #f7f7f7; }
.back { transform: rotate(-45deg); margin-left: auto; margin-right: 42px; }
.row { display: grid; grid-template-columns: minmax(0, 1fr) repeat(4, 10px); align-items: center; }
.row > svg { margin-left: 1px; }
.row span { display: flex; align-items: center; gap: 1px; overflow: hidden; white-space: nowrap; }
.filter { height: 10px; padding-left: 1px; }
.root { height: 10px; background: linear-gradient(#e2ac35, #e2ac35) 0 100% / calc(100% - 40px) 1px no-repeat, #a6cbe6; }
.root .w { background: #fff; height: 9px; width: 8px; margin-left: 1px; }
.tree { height: 358px; display: grid; grid-auto-rows: 1fr; }
.tree .row { padding-left: 9px; position: relative; }
.tree .e::before { content: ""; position: absolute; left: 3px; width: 2px; height: 4px; background: #666; clip-path: polygon(0 0, 100% 50%, 0 100%); }
.g { color: #aaa; }
.rollback { height: 2px; background: #4f93c2; margin-right: 40px; }
.hscroll { margin: auto 40px 0 0; height: 8px; background: #eee; padding: 3px 48px 3px 7px; }
.hscroll i { display: block; height: 2px; background: #aaa; }

.view { flex: 1; position: relative; min-width: 0; background: #fff; }
.canvas { width: 100%; height: 100%; }
.ax { font-size: 4px; }
.heads { position: absolute; top: 0; left: 288px; display: flex; align-items: center; gap: 2px; height: 10px; }
.heads .d { width: 12px; }
.heads .pick { height: 10px; width: 13px; }
.heads .d::after { margin: 0; }
.docwin { position: absolute; top: 1px; right: 4px; display: flex; gap: 2px; opacity: .7; }
.task { position: absolute; top: 26px; right: 0; width: 11px; display: flex; flex-direction: column; background: #d4d4d4; }
.task button { height: 10px; justify-content: center; border-bottom: 1px solid #eee; }
.task .act { background: #fff; }
.split { position: absolute; left: -1px; top: 241px; width: 4px; height: 16px; border: 1px solid #bbb; background: #f5f5f5; }

.pdm { width: 78px; flex: none; display: flex; flex-direction: column; background: #f7f7f7; border-left: 2px solid #c8c8c8; overflow: hidden; }
.pdm header { height: 9px; background: #a9a9ae; display: flex; align-items: center; gap: 3px; padding: 0 2px 0 3px; color: #111; flex: none; white-space: nowrap; }
.pdm header b { margin: 0 auto 0 3px; }
.pdm header svg { width: 6px; height: 6px; }
.ptools { display: flex; align-items: center; justify-content: space-between; padding: 0 2px; height: 12px; flex: none; }
.pdm h2 { font-weight: 700; padding-left: 1px; }
.file { height: 9px; flex: none; display: flex; align-items: center; gap: 1px; background: #a6cbe6; white-space: nowrap; padding-left: 2px; }
.ref { background: #00ff10; margin-left: 9px; }
.pscroll { margin-top: 168px; height: 6px; background: #f0f0f0; border-bottom: 1px solid #ccc; padding: 1px 0 0 8px; }
.pscroll i { display: block; width: 11px; height: 1px; background: #999; }
.pdm h3 { font-weight: 700; margin: 1px 0 6px 1px; }
.thumb { width: 42px; height: 34px; margin: 0 0 11px 22px; }
table { border-collapse: collapse; table-layout: fixed; width: 100%; height: 112px; flex: none; }
th { font-weight: 700; text-align: left; padding: 0 1px; background: #fff; border-top: 1px solid #ccc; }
th:first-child { width: 38px; border-right: 1px solid #999; }
td { padding: 0 0 0 2px; white-space: nowrap; line-height: 7px; }
td svg { display: inline-block; vertical-align: middle; margin-right: 2px; width: 7px; height: 7px; }

footer { display: flex; align-items: center; height: 8px; flex: none; background: #e6e6e6; border-top: 1px solid #bbb; }
footer .edit { margin-left: auto; margin-right: 36px; }
footer .dot { margin: 0 6px; }
```
